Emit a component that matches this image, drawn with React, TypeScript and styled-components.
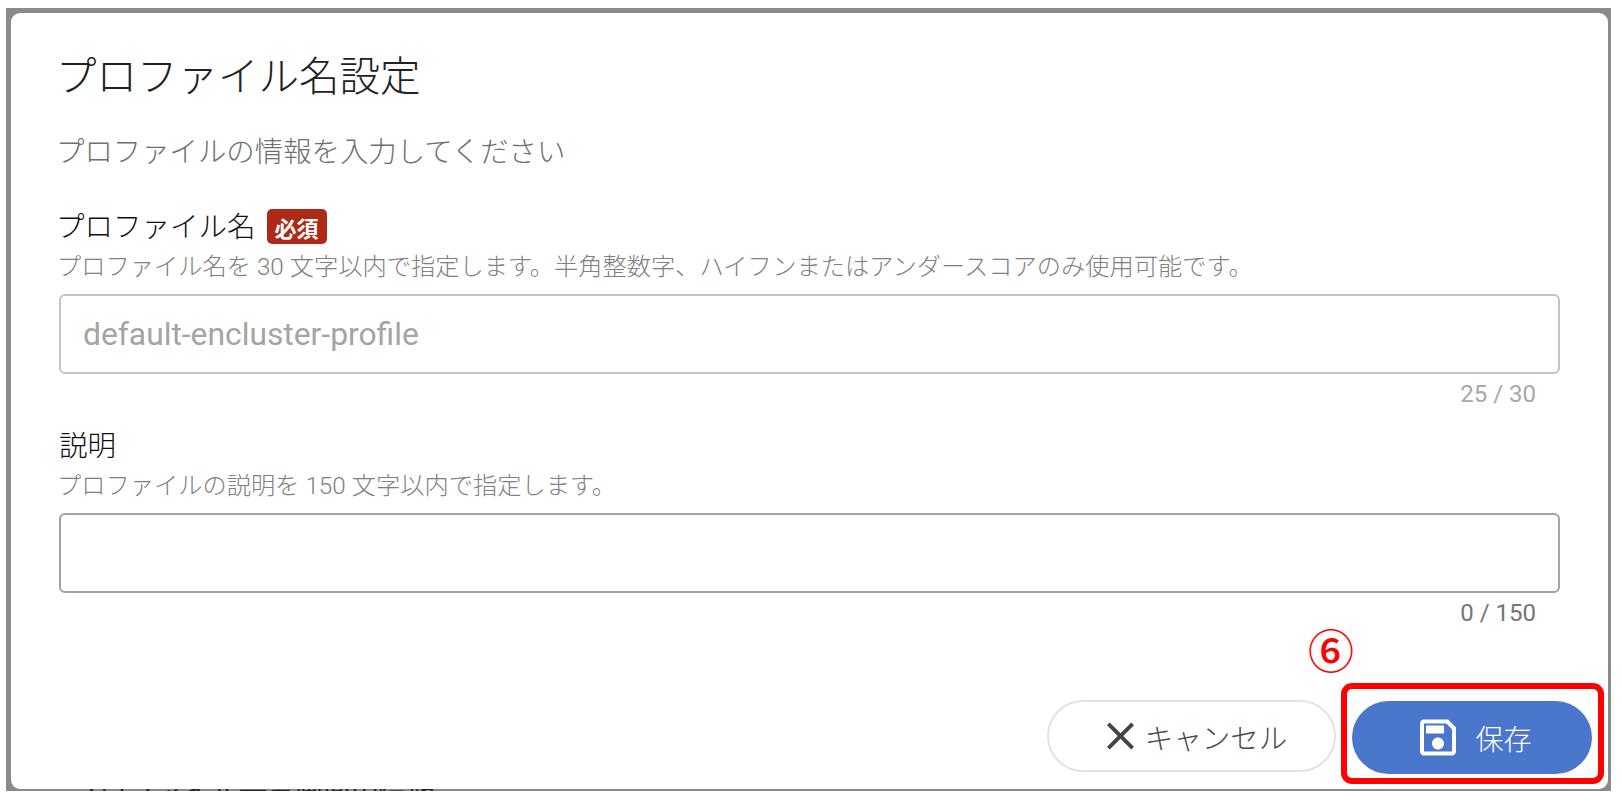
import React from "react";
import styled, { createGlobalStyle } from "styled-components";

const Global = createGlobalStyle`
  html, body { margin: 0; padding: 0; background: #fff; }
  body { font-family: Roboto, "Noto Sans CJK JP", sans-serif; }
  * { box-sizing: border-box; }
`;

const Page = styled.div`
  width: 1622px;
  height: 802px;
  padding: 8px 11px 10px 6px;
  overflow: hidden;
`;

const Frame = styled.div`
  height: 783px;
  background: #8a8a8a;
  padding: 5px 3px 0 5px;
  display: flex;
  flex-direction: column;
`;

const Dialog = styled.section`
  height: 776px;
  flex: none;
  background: #fff;
  border-radius: 9px;
  padding: 41px 48px 0;
  display: flex;
  flex-direction: column;
`;

const Title = styled.h2`
  margin: 0 0 35px -3px;
  font-size: 40.5px;
  line-height: 46px;
  font-weight: 300;
  color: #212121;
`;

const Subtitle = styled.p`
  margin: 0 0 40px -3px;
  font-size: 28.4px;
  line-height: 36px;
  font-weight: 300;
  color: #6f6f6f;
`;

const LabelRow = styled.div<{ $inset: number }>`
  display: flex;
  align-items: center;
  gap: 11px;
  height: 34px;
  margin-left: ${(p) => p.$inset}px;
`;

const Label = styled.label`
  font-size: 28.5px;
  line-height: 34px;
  font-weight: 300;
  color: #111;
`;

const Badge = styled.span`
  width: 60px;
  height: 35px;
  margin-top: -3px;
  border-radius: 5px;
  background: #ad2a17;
  color: #fff;
  font-size: 22px;
  font-weight: 700;
  display: flex;
  align-items: center;
  justify-content: center;
`;

const Hint = styled.p`
  margin: 6px 0 11px -2px;
  font-size: 24.25px;
  line-height: 32px;
  font-weight: 300;
  color: #808080;
`;

const Input = styled.input<{ $border: string }>`
  display: block;
  width: 100%;
  height: 80px;
  padding: 0 22px;
  border: 2px solid ${(p) => p.$border};
  border-radius: 6px;
  outline: none;
  background: #fff;
  font-family: Roboto, sans-serif;
  font-size: 31.8px;
  &::placeholder { color: #a4a4a4; opacity: 1; }
`;

const Counter = styled.div<{ $color: string }>`
  margin-top: 5px;
  padding-right: 24px;
  text-align: right;
  font-size: 24px;
  line-height: 30px;
  color: ${(p) => p.$color};
`;

const Field = styled.div`
  margin-bottom: 21px;
`;

const Footer = styled.div`
  margin: 55px -44px 0 0;
  display: flex;
  justify-content: flex-end;
  align-items: flex-start;
  gap: 5px;
`;

const CancelButton = styled.button`
  width: 289px;
  height: 72px;
  margin-top: 17px;
  padding: 0 0 0 11px;
  border: 2px solid #e2e2e2;
  border-radius: 36px;
  background: #fff;
  color: #4a4a4a;
  font: inherit;
  font-size: 28.5px;
  font-weight: 300;
  display: flex;
  align-items: center;
  justify-content: center;
  gap: 11px;
`;

const Highlight = styled.div`
  position: relative;
  width: 263px;
  height: 101px;
  padding: 12px 7px 5px 5px;
  border: 6px solid #ff0000;
  border-radius: 11px;
`;

const StepMark = styled.span`
  position: absolute;
  left: -39px;
  top: -67px;
  font-family: "Noto Sans CJK JP", sans-serif;
  font-size: 46px;
  line-height: 52px;
  font-weight: 500;
  color: #ff0000;
`;

const SaveButton = styled.button`
  width: 240px;
  height: 73px;
  padding: 0 0 0 8px;
  border: 0;
  border-radius: 37px;
  background: #4a76cc;
  color: #fff;
  font: inherit;
  font-size: 28px;
  font-weight: 300;
  display: flex;
  align-items: center;
  justify-content: center;
  gap: 19px;
`;

const Peek = styled.div`
  height: 2px;
  overflow: hidden;
  padding-left: 60px;
  font-size: 28px;
  line-height: 34px;
  color: #222;
  white-space: nowrap;
`;

const PeekText = styled.div`
  margin-top: -13px;
`;

export default function App() {
  return (
    <>
      <Global />
      <Page>
        <Frame>
          <Dialog>
            <Title>プロファイル名設定</Title>
            <Subtitle>プロファイルの情報を入力してください</Subtitle>
            <Field>
              <LabelRow $inset={-3}>
                <Label>プロファイル名</Label>
                <Badge>必須</Badge>
              </LabelRow>
              <Hint>プロファイル名を 30 文字以内で指定します。半角整数字、ハイフンまたはアンダースコアのみ使用可能です。</Hint>
              <Input $border="#c4c4c4" placeholder="default-encluster-profile" />
              <Counter $color="#a8a8a8">25 / 30</Counter>
            </Field>
            <div>
              <LabelRow $inset={0}>
                <Label>説明</Label>
              </LabelRow>
              <Hint>プロファイルの説明を 150 文字以内で指定します。</Hint>
              <Input $border="#a2a2a2" />
              <Counter $color="#757575">0 / 150</Counter>
            </div>
            <Footer>
              <CancelButton>
                <svg width="27" height="28" viewBox="5 5 14 14" fill="#444">
                  <path d="M19 6.41L17.59 5 12 10.59 6.41 5 5 6.41 10.59 12 5 17.59 6.41 19 12 13.41 17.59 19 19 17.59 13.41 12z" />
                </svg>
                キャンセル
              </CancelButton>
              <Highlight>
                <StepMark>⑥</StepMark>
                <SaveButton>
                  <svg width="36" height="37" viewBox="3 3 18 18" fill="#fff">
                    <path d="M17 3H5c-1.11 0-2 .9-2 2v14c0 1.1.89 2 2 2h14c1.1 0 2-.9 2-2V7l-4-4zm2 16H5V5h11.17L19 7.83V19zm-7-7c-1.66 0-3 1.34-3 3s1.34 3 3 3 3-1.34 3-3-1.34-3-3-3zM6 6h9v4H6z" />
                  </svg>
                  保存
                </SaveButton>
              </Highlight>
            </Footer>
          </Dialog>
          <Peek>
            <PeekText>プロファイル一覧画面の情報</PeekText>
          </Peek>
        </Frame>
      </Page>
    </>
  );
}
